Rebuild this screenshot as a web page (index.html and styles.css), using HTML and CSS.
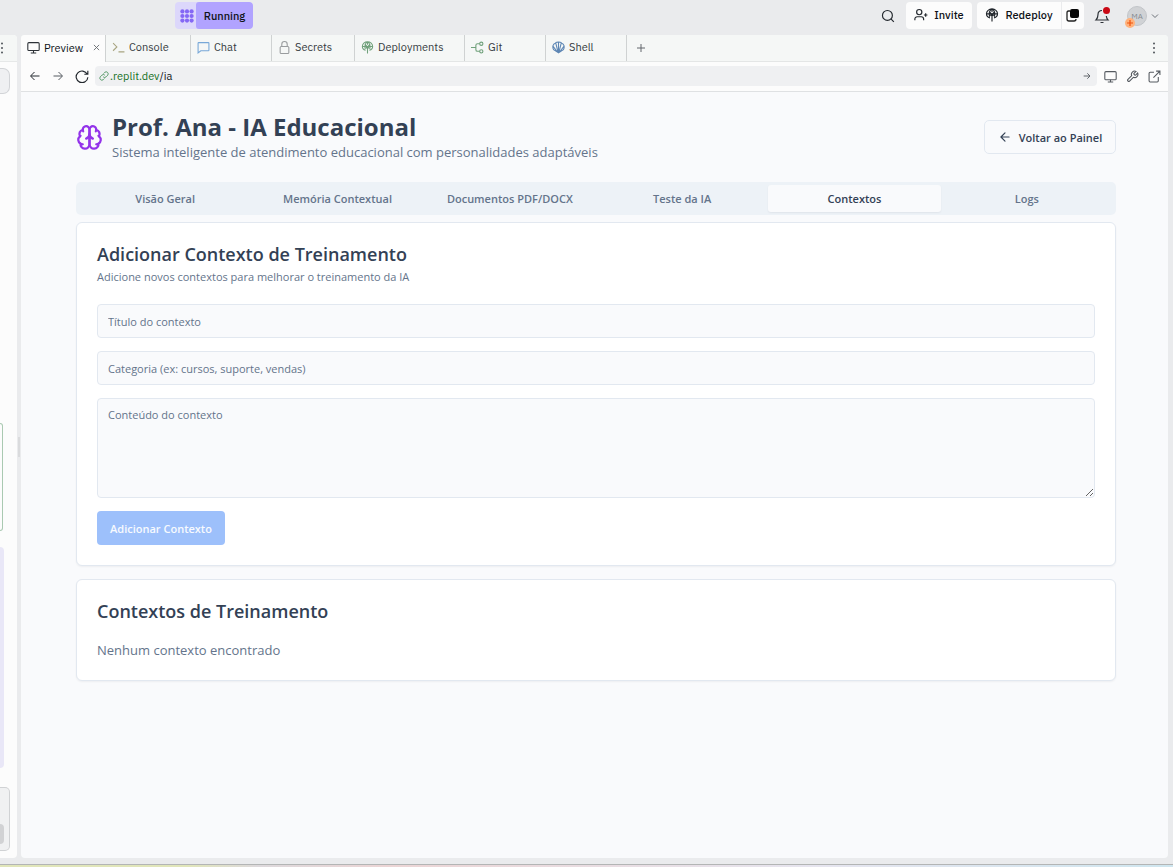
FILE: index.html
```html
<!DOCTYPE html>
<html lang="pt-BR">
<head>
<meta charset="utf-8">
<meta name="viewport" content="width=device-width, initial-scale=1">
<title>Prof. Ana - IA Educacional</title>
<link rel="stylesheet" href="styles.css">
</head>
<body>
<div class="app">
  <header class="topbar">
    <div class="run-group">
      <button class="run-apps" aria-label="Workflows">
        <svg class="icon-14" viewBox="0 0 14 14" fill="#8568f5"><g id="dots"><circle cx="2.4" cy="2.4" r="2.1"/><circle cx="7" cy="2.4" r="2.1"/><circle cx="11.6" cy="2.4" r="2.1"/><circle cx="2.4" cy="7" r="2.1"/><circle cx="7" cy="7" r="2.1"/><circle cx="11.6" cy="7" r="2.1"/><circle cx="2.4" cy="11.6" r="2.1"/><circle cx="7" cy="11.6" r="2.1"/><circle cx="11.6" cy="11.6" r="2.1"/></g></svg>
      </button>
      <button class="run-state">Running</button>
    </div>
    <div class="top-actions">
      <button class="plain search" aria-label="Search"><svg class="icon-14 line" viewBox="0 0 24 24"><circle cx="11" cy="11" r="8.5"/><path d="M17 17l5 5"/></svg></button>
      <button class="top-btn invite"><svg class="icon-14 line" viewBox="0 0 24 24"><circle cx="9" cy="7" r="4.5"/><path d="M1.500 21v-2a4 4 0 0 1 4-4h7a4 4 0 0 1 4 4v2M20 9v6M17 12h6"/></svg>Invite</button>
      <div class="deploy-group">
        <button class="top-btn deploy"><svg class="icon-14 line" viewBox="0 0 24 24"><path d="M8.500 17C4.500 16 2.500 13 2.500 10a9.500 8.500 0 0 1 19 0c0 3-2 6-6 7M12 11v12M3 10h18M8 15C6 9 8 3 12 2c4 1 6 7 4 13M12 2v5M7 6l5 5 5-5M9 13l3-2 3 2"/></svg>Redeploy</button>
        <button class="top-btn copies" aria-label="Open deployment"><svg class="icon-14" viewBox="0 0 14 14"><path d="M4 3H2.500Q1 3 1 5v6q0 2 2 2h5q2 0 2-2" fill="none" stroke="#222" stroke-width="1.300"/><rect x="4" y="1" width="9" height="9" rx="2" fill="#080808"/></svg></button>
      </div>
      <button class="plain bell" aria-label="Notifications"><svg class="icon-16" viewBox="0 0 16 16"><path d="M8 2.500C5.500 2.500 4 4 4 6.500c0 3-1 4.500-2 5.500h12c-1-1-1.500-2.500-1.700-4M6.500 14.500h3" fill="none" stroke="#2c3137" stroke-width="1.200"/></svg><span class="bell-dot"></span></button>
      <button class="plain account" aria-label="Account"><span class="avatar">MA<svg class="avatar-badge" viewBox="0 0 10 10"><circle cx="5" cy="5" r="5" fill="#ffb27c"/><path d="M5 2v6M2 5h6" stroke="#f0530c" stroke-width="1.200"/></svg></span><svg class="chevron" viewBox="0 0 8 8"><path d="M1 2.500l3 3 3-3" fill="none" stroke="#6c7178"/></svg></button>
    </div>
  </header>

  <div class="workspace">
    <aside class="side">
      <div class="side-head"><svg class="side-dots" viewBox="0 0 4 12" fill="#50555b"><circle cx="2" cy="1.500" r="1"/><circle cx="2" cy="6" r="1"/><circle cx="2" cy="10.500" r="1"/></svg></div>
      <div class="side-body">
        <div class="side-toggle"></div>
        <div class="side-feed">
          <div class="side-green"></div>
          <div class="side-lilac"></div>
          <div class="side-compose"><span class="side-send"></span></div>
        </div>
      </div>
    </aside>
    <div class="splitter"><span class="grip"></span></div>

    <main class="pane">
      <nav class="tabs">
        <button class="tab active"><svg class="icon-13" viewBox="0 0 24 24"><rect x="1.500" y="3" width="21" height="14.500" rx="2"/><path d="M7 22h10M12 18v4"/></svg>Preview<svg class="close" viewBox="0 0 8 8"><path d="M1 1l6 6M7 1L1 7"/></svg></button>
        <button class="tab console"><svg class="icon-13 olive" viewBox="0 0 24 24"><path d="M2 4l7 7-7 7M12 20h11"/></svg>Console</button>
        <button class="tab chat"><svg class="icon-13 blue" viewBox="0 0 24 24"><path d="M3 3h18a1 1 0 0 1 1 1v13a1 1 0 0 1-1 1H7l-5 4V4a1 1 0 0 1 1-1z"/></svg>Chat</button>
        <button class="tab secrets"><svg class="icon-13 grey" viewBox="0 0 24 24"><rect x="4" y="10" width="16" height="13" rx="2"/><path d="M7 10V6a5 5 0 0 1 10 0v4"/></svg>Secrets</button>
        <button class="tab deployments"><svg class="icon-13 green" viewBox="0 0 24 24"><path d="M8.500 17C4.500 16 2.500 13 2.500 10a9.500 8.500 0 0 1 19 0c0 3-2 6-6 7M12 11v12M3 10h18M8 15C6 9 8 3 12 2c4 1 6 7 4 13M12 2v5M7 6l5 5 5-5M9 13l3-2 3 2"/></svg>Deployments</button>
        <button class="tab git"><svg class="icon-13 green" viewBox="0 0 24 24"><path d="M0 12h9M16 5h-4q-3 0-3 3v8q0 3 3 3h4"/><circle cx="19" cy="5" r="3"/><circle cx="19" cy="19" r="3"/></svg>Git</button>
        <button class="tab shell"><svg class="icon-13 steel" viewBox="0 0 24 24"><path d="M12 22L3 16C0 11 2 5 6 4c3-3 9-3 12 0 4 1 6 7 3 12zM12 21V2M11 20L7 4M13 20l4-16M9 19L2 10M15 19l7-9M8 20h8"/></svg>Shell</button>
        <button class="tab-add" aria-label="New tab"><svg class="close" viewBox="0 0 8 8"><path d="M4 0v8M0 4h8"/></svg></button>
        <button class="tab-menu" aria-label="Pane menu"><svg class="side-dots" viewBox="0 0 4 12" fill="#50555b"><circle cx="2" cy="1.500" r="1"/><circle cx="2" cy="6" r="1"/><circle cx="2" cy="10.500" r="1"/></svg></button>
      </nav>

      <div class="address">
        <button class="plain" aria-label="Back"><svg class="icon-12 line" viewBox="0 0 24 24"><path d="M21 12H4M11 4l-8 8 8 8"/></svg></button>
        <button class="plain" aria-label="Forward"><svg class="icon-12 line soft" viewBox="0 0 24 24"><path d="M3 12h17M13 4l8 8-8 8"/></svg></button>
        <button class="plain" aria-label="Reload"><svg class="icon-14 line" viewBox="0 0 24 24"><path d="M22 3v6h-6M21 9A10 10 0 1 0 22 14"/></svg></button>
        <div class="url"><svg class="url-link" viewBox="0 0 24 24"><path d="M10 14a5 5 0 0 0 7 0l4-4a5 5 0 0 0-7-7l-3 3M14 10a5 5 0 0 0-7 0l-4 4a5 5 0 0 0 7 7l3-3"/></svg><span class="url-text"><span class="host">.replit.dev</span>/ia</span><svg class="url-go" viewBox="0 0 24 24"><path d="M2 12h19M13 4l8 8-8 8"/></svg></div>
        <button class="plain tool" aria-label="Device size"><svg class="icon-13 line soft" viewBox="0 0 24 24"><rect x="1.500" y="3" width="21" height="15" rx="2"/><path d="M7 22h10M12 18v4"/></svg></button>
        <button class="plain tool" aria-label="Developer tools"><svg class="icon-13 line soft" viewBox="0 0 24 24"><path d="M14.700 6.300a1 1 0 0 0 0 1.400l1.600 1.600a1 1 0 0 0 1.400 0l3.770-3.770a6 6 0 0 1-7.940 7.940l-6.910 6.910a2.120 2.120 0 0 1-3-3l6.910-6.910a6 6 0 0 1 7.940-7.940z"/></svg></button>
        <button class="plain tool" aria-label="Open in new tab"><svg class="icon-13 line soft" viewBox="0 0 24 24"><path d="M11 4H4a2 2 0 0 0-2 2v14a2 2 0 0 0 2 2h13a2 2 0 0 0 2-2v-7M15 2h7v7M22 2L10 14"/></svg></button>
      </div>

      <section class="page">
        <header class="page-head">
          <svg class="brain" viewBox="0 0 24 24"><path d="M12 5a3 3 0 1 0-5.997.125 4 4 0 0 0-2.526 5.770 4 4 0 0 0 .556 6.588A4 4 0 1 0 12 18Z"/><path d="M12 5a3 3 0 1 1 5.997.125 4 4 0 0 1 2.526 5.770 4 4 0 0 1-.556 6.588A4 4 0 1 1 12 18Z"/><path d="M15 13a4.500 4.500 0 0 1-3-4 4.500 4.500 0 0 1-3 4M17.599 6.500a3 3 0 0 0 .399-1.375M6.003 5.125A3 3 0 0 0 6.401 6.500M3.477 10.896a4 4 0 0 1 .585-.396M19.938 10.500a4 4 0 0 1 .585.396M6 18a4 4 0 0 1-1.967-.516M19.967 17.484A4 4 0 0 1 18 18"/></svg>
          <div class="page-title">
            <h1>Prof. Ana - IA Educacional</h1>
            <p>Sistema inteligente de atendimento educacional com personalidades adaptáveis</p>
          </div>
          <button class="back"><svg class="back-icon" viewBox="0 0 24 24"><path d="M12 19l-7-7 7-7M19 12H5"/></svg>Voltar ao Painel</button>
        </header>

        <div class="segments" role="tablist">
          <button role="tab">Visão Geral</button>
          <button role="tab">Memória Contextual</button>
          <button role="tab">Documentos PDF/DOCX</button>
          <button role="tab">Teste da IA</button>
          <button role="tab" aria-selected="true">Contextos</button>
          <button role="tab">Logs</button>
        </div>

        <form class="card">
          <h2>Adicionar Contexto de Treinamento</h2>
          <p class="hint">Adicione novos contextos para melhorar o treinamento da IA</p>
          <div class="fields">
            <input type="text" placeholder="Título do contexto" aria-label="Título do contexto">
            <input type="text" placeholder="Categoria (ex: cursos, suporte, vendas)" aria-label="Categoria">
            <textarea placeholder="Conteúdo do contexto" aria-label="Conteúdo do contexto"></textarea>
            <button class="submit" type="submit" disabled>Adicionar Contexto</button>
          </div>
        </form>

        <section class="card">
          <h2>Contextos de Treinamento</h2>
          <p class="empty">Nenhum contexto encontrado</p>
        </section>
      </section>
    </main>
  </div>
  <div class="desktop-edge"></div>
</div>
</body>
</html>
```

FILE: styles.css
```css
* { box-sizing: border-box; }

body {
  margin: 0;
  background: #eaebed;
  color: #0f1318;
  font-family: "IBM Plex Sans", Inter, "Liberation Sans", sans-serif;
  font-size: 11px;
}

button { font: inherit; color: inherit; border: 0; background: none; padding: 0; }
h1, h2, p { margin: 0; }
svg { flex: none; }

.app { display: flex; flex-direction: column; height: 100vh; }

.icon-12 { width: 12px; height: 12px; }
.icon-13 { width: 13px; height: 13px; }
.icon-14 { width: 14px; height: 14px; }
.icon-16 { width: 16px; height: 16px; }
.line { fill: none; stroke: #23282e; stroke-width: 2; }
.soft { stroke: #555a60; }
.plain { display: flex; align-items: center; }

/* Top bar */
.topbar { display: flex; justify-content: space-between; height: 35px; padding: 2px 14px 0 175px; }
.run-group { display: flex; height: 27px; border-radius: 4px; overflow: hidden; background: #dcd7fb; }
.run-apps { display: flex; align-items: center; justify-content: center; width: 21px; padding-left: 2px; }
.run-state { width: 57px; background: #b1a3ff; border-radius: 3px; font-size: 11px; font-weight: 500; }
.top-actions { display: flex; height: 27px; }
.search { margin-right: 11px; }
.top-btn { display: flex; align-items: center; justify-content: center; gap: 6px; padding-bottom: 1px; background: #fcfcfc; font-size: 11px; font-weight: 500; }
.invite { width: 66px; border-radius: 4px; margin-right: 5px; }
.deploy-group { display: flex; gap: 1px; border-radius: 4px; overflow: hidden; }
.deploy { width: 84px; }
.copies { width: 22px; }
.bell { position: relative; margin: 0 17px 0 10px; }
.bell-dot { position: absolute; top: 5px; right: 0; width: 7px; height: 7px; border-radius: 50%; background: #c90814; }
.account { gap: 4px; }
.avatar { position: relative; width: 20px; height: 20px; border-radius: 50%; border: 1px solid #c2c5c9; background: #d0d2d5; color: #858a90; font-size: 8px; line-height: 18px; text-align: center; }
.avatar-badge { position: absolute; left: -3px; bottom: -3px; width: 10px; height: 10px; }
.chevron { width: 8px; height: 8px; }

/* Workspace */
.workspace { display: flex; flex: 1; min-height: 0; padding-right: 5px; margin-bottom: 6px; }
.side { display: flex; flex-direction: column; width: 17px; background: #fcfcfc; border-radius: 0 4px 4px 0; overflow: hidden; }
.side-head { display: flex; align-items: center; height: 27px; background: #f5f7f6; border-bottom: 1px solid #e6e8e8; }
.side-dots { width: 4px; height: 12px; }
.side-body { display: flex; flex-direction: column; flex: 1; padding: 6px 0 7px; }
.side-toggle { width: 10px; height: 26px; border: 1px solid #d2d4d7; border-left: 0; border-radius: 0 7px 7px 0; background: #eff0f2; }
.side-feed { display: flex; flex-direction: column; justify-content: flex-end; flex: 1; }
.side-green { width: 3px; height: 108px; border: 1px solid #a9c9b1; border-left: 0; border-radius: 0 4px 4px 0; margin-bottom: 16px; }
.side-lilac { width: 4px; height: 221px; border-radius: 0 4px 4px 0; background: #e9e7f7; margin-bottom: 19px; }
.side-compose { display: flex; align-items: flex-end; width: 10px; height: 64px; padding-bottom: 6px; border: 1px solid #d0d2d4; border-left: 0; border-radius: 0 5px 5px 0; background: #f0f1f2; }
.side-send { width: 4px; height: 20px; border-radius: 0 4px 4px 0; background: #d1d2d4; }
.splitter { display: flex; align-items: center; width: 4px; }
.grip { width: 2px; height: 20px; margin-left: 1px; background: #dadbdd; }

.pane { display: flex; flex-direction: column; flex: 1; min-width: 0; border-radius: 4px; overflow: hidden; background: #f9fafc; }

/* Pane tabs */
.tabs { display: flex; height: 27px; background: #f5f7f6; border-bottom: 1px solid #e4e6e6; }
.tab { display: flex; align-items: center; gap: 4px; padding: 0 6px 2px; border-right: 1px solid #cfd2d2; color: #343a40; }
.tab svg { fill: none; stroke: #2c3137; stroke-width: 2; }
.tab.active { width: 85px; background: #fcfcfc; margin-bottom: -1px; color: #0f1318; }
.tab .close, .tab-add .close { width: 8px; height: 8px; stroke: #62676c; stroke-width: 1; }
.tab .close { width: 7px; height: 7px; margin-left: auto; margin-right: -1px; }
.console { width: 85px; }
.chat { width: 81px; }
.secrets { width: 83px; }
.deployments { width: 110px; }
.git { width: 81px; }
.shell { width: 81px; }
.tab .olive { stroke: #a8a580; }
.tab .blue { stroke: #78a8d8; }
.tab .grey { stroke: #999c9e; }
.tab .green { stroke: #70a17b; }
.tab .steel { stroke: #5d86b4; }
.tab-add { display: flex; align-items: center; padding: 0 10px; }
.tab-menu { display: flex; align-items: center; margin-left: auto; padding-right: 12px; }

/* Address row */
.address { display: flex; align-items: center; gap: 11px; height: 30px; padding: 0 7px 1px 8px; background: #fcfcfc; border-bottom: 1px solid #dfe1e3; }
.address .icon-14 { margin-right: -5px; }
.url { display: flex; align-items: center; flex: 1; height: 20px; padding: 0 6px 0 4px; border-radius: 4px; background: #eff0f2; margin-right: -4px; }
.url-link { width: 10px; height: 10px; margin-right: 1px; fill: none; stroke: #3f8b52; stroke-width: 2; }
.url-text { font-size: 11px; }
.host { color: #16701f; }
.url-go { width: 8px; height: 8px; margin-left: auto; fill: none; stroke: #62676c; stroke-width: 3; }
.tool { margin-right: -2px; }
.address .tool:last-child { margin-right: 0; }

/* Previewed page */
.page { flex: 1; padding: 20px 52px 20px 55px; color: #334155; font-family: "Segoe UI", "Open Sans", "Noto Sans", sans-serif; font-size: 11px; }
.page-head { display: flex; align-items: center; height: 50px; margin-bottom: 20px; }
.brain { width: 27px; height: 27px; margin-right: 9px; fill: none; stroke: #9333ea; stroke-width: 2; stroke-linecap: round; stroke-linejoin: round; }
.page-title { flex: 1; }
.page-title h1 { font-size: 24px; line-height: 30px; font-weight: 700; }
.page-title p { font-size: 13px; line-height: 20px; color: #64748b; }
.back { display: flex; align-items: center; justify-content: center; gap: 7px; width: 132px; height: 34px; border: 1px solid #e2e8f0; border-radius: 5px; font-weight: 600; }
.back-icon { width: 14px; height: 14px; fill: none; stroke: #334155; stroke-width: 2; stroke-linecap: round; stroke-linejoin: round; }

.segments { display: grid; grid-template-columns: repeat(6, 1fr); height: 33px; padding: 3px; border-radius: 5px; background: #edf2f7; margin-bottom: 7px; }
.segments button { color: #64748b; font-weight: 600; border-radius: 3px; }
.segments [aria-selected="true"] { background: #f9fafc; color: #334155; box-shadow: 0 1px 2px rgba(15, 23, 42, .06); }

.card { display: block; padding: 20px; margin-bottom: 13px; border: 1px solid #e2e8f0; border-radius: 6px; background: #fff; box-shadow: 0 1px 2px rgba(15, 23, 42, .05); }
.card h2 { font-size: 18px; line-height: 22px; font-weight: 600; }
.hint { line-height: 17px; margin-top: 3px; color: #64748b; }
.fields { display: flex; flex-direction: column; gap: 13px; margin-top: 19px; }
.fields input, .fields textarea { display: block; width: 100%; margin: 0; padding: 0 10px; border: 1px solid #e2e8f0; border-radius: 4px; background: #f9fafc; color: #334155; font: inherit; }
.fields input { height: 34px; }
.fields textarea { height: 100px; padding: 7px 10px; line-height: 17px; resize: vertical; }
.fields ::placeholder { color: #64748b; opacity: 1; }
.submit { align-self: flex-start; width: 128px; height: 34px; border-radius: 4px; background: #9dc0fb; color: #f7fafe; font-weight: 600; }
.empty { margin-top: 18px; font-size: 13px; line-height: 20px; color: #64748b; }

.desktop-edge { height: 3px; border-top: 1px solid #b3b5b5; background: linear-gradient(90deg, #e1e6ba 0 16%, #ddd9dc 22%, #ecd5d5 33%, #e6e5ef 70%, #cfe6ef); }
```
